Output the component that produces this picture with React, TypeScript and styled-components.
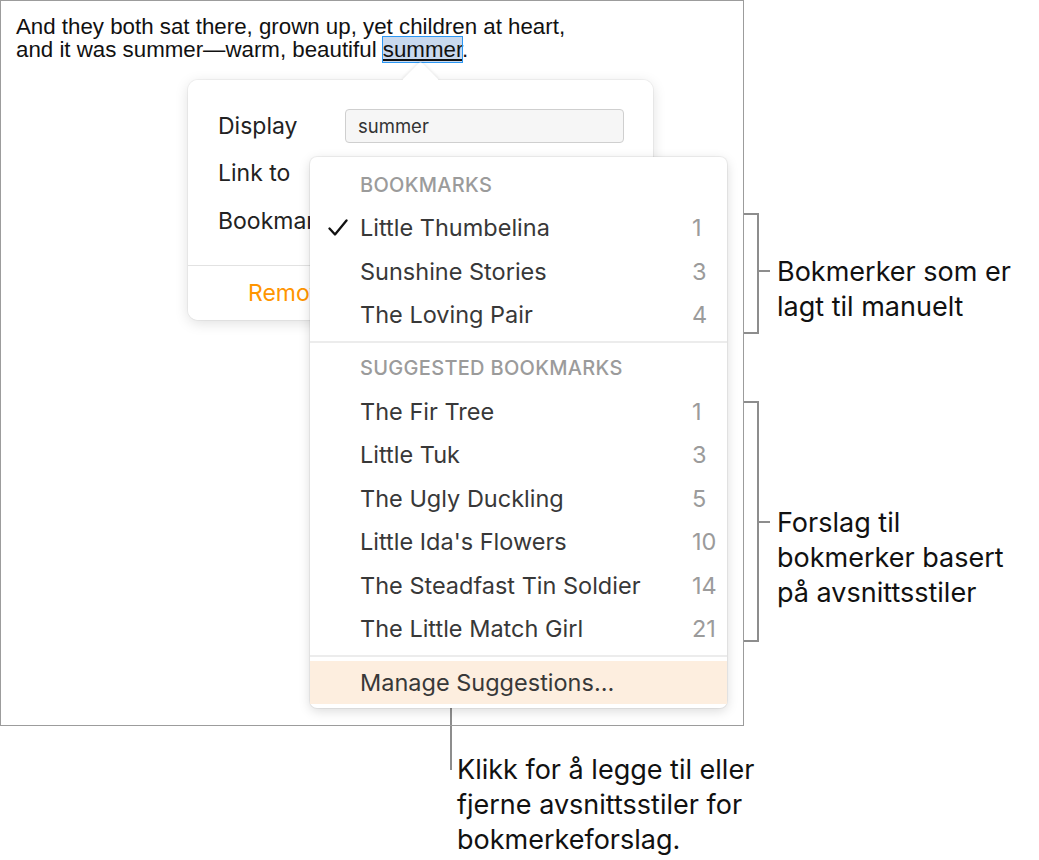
import React from "react";
import styled, { createGlobalStyle } from "styled-components";

const Global = createGlobalStyle`
  html, body { margin: 0; padding: 0; background: #ffffff; }
  * { box-sizing: border-box; }
`;

const Page = styled.div`
  width: 1039px;
  height: 860px;
  display: flex;
  flex-direction: column;
  font-family: "Inter", "Noto Sans", sans-serif;
`;

const TopRow = styled.div`
  display: flex;
  align-items: flex-start;
`;

const Frame = styled.div`
  position: relative;
  width: 744px;
  height: 726px;
  border: 1px solid #9c9c9c;
  flex: none;
`;

const Paragraph = styled.p`
  margin: 0;
  padding: 14px 0 0 15px;
  font-family: "Liberation Sans", Arial, sans-serif;
  font-size: 22.3px;
  line-height: 23px;
  color: #111111;
`;

const Selected = styled.span`
  background: #c9d9ee;
  outline: 1px solid #2b97f4;
  text-decoration: underline;
  text-underline-offset: 2px;
`;

const Popover = styled.div`
  position: absolute;
  left: 187px;
  top: 79px;
  width: 465px;
  height: 240px;
  background: #ffffff;
  border-radius: 10px;
  box-shadow: 0 0 0 1px rgba(0, 0, 0, 0.04), 0 3px 14px rgba(0, 0, 0, 0.13);
`;

const Arrow = styled.div`
  position: absolute;
  left: 219px;
  top: -13px;
  width: 27px;
  height: 27px;
  background: #ffffff;
  transform: rotate(45deg);
  border-radius: 3px;
  box-shadow: -1px -1px 3px rgba(0, 0, 0, 0.08);
`;

const PopBody = styled.div`
  position: relative;
  display: flex;
  flex-direction: column;
  height: 100%;
  background: #ffffff;
  border-radius: 10px;
`;

const Form = styled.div`
  padding: 22px 28px 20px 30px;
  display: flex;
  flex-direction: column;
  border-bottom: 1px solid #e2e2e2;
`;

const FormRow = styled.div`
  height: 47.5px;
  display: grid;
  grid-template-columns: 127px 279px;
  align-items: center;
`;

const Label = styled.span`
  font-size: 23px;
  color: #222222;
`;

const Field = styled.div`
  height: 34px;
  border: 1px solid #cfcfcf;
  border-radius: 4px;
  background: #f6f6f6;
  padding: 0 12px;
  display: flex;
  align-items: center;
  font-size: 18.5px;
  color: #333333;
`;

const Footer = styled.div`
  flex: 1;
  display: flex;
  align-items: center;
  padding-left: 60px;
  font-size: 23px;
  color: #ff9500;
`;

const Menu = styled.div`
  position: absolute;
  left: 309px;
  top: 156px;
  width: 417px;
  background: #ffffff;
  border-radius: 7px;
  padding: 6px 0 4px;
  box-shadow: 0 0 0 1px rgba(0, 0, 0, 0.05), 0 3px 12px rgba(0, 0, 0, 0.15);
  display: flex;
  flex-direction: column;
`;

const Heading = styled.div`
  height: 43px;
  display: flex;
  align-items: center;
  padding-left: 50px;
  font-size: 20px;
  font-weight: 500;
  letter-spacing: 0.3px;
  color: #9b9b9b;
`;

const Item = styled.div<{ $highlight?: boolean }>`
  height: 43.5px;
  display: flex;
  align-items: center;
  padding: 0 12px 0 18px;
  font-size: 23.5px;
  color: #383838;
  background: ${(p) => (p.$highlight ? "#fdeedf" : "transparent")};
`;

const CheckSlot = styled.span`
  width: 32px;
  flex: none;
  display: flex;
  align-items: center;
`;

const ItemName = styled.span`
  flex: 1;
  white-space: nowrap;
`;

const Count = styled.span`
  width: 23px;
  flex: none;
  color: #9b9b9b;
  white-space: nowrap;
`;

const Divider = styled.div`
  height: 2px;
  margin: 4px 0;
  background: #ececec;
`;

const Callouts = styled.div`
  display: flex;
  flex-direction: column;
  margin-left: -1px;
  padding-top: 213px;
  gap: 67px;
`;

const Callout = styled.div`
  display: flex;
  align-items: flex-start;
`;

const Bracket = styled.div<{ $h: number }>`
  width: 16px;
  height: ${(p) => p.$h}px;
  flex: none;
  border: 2px solid #8d8d8d;
  border-left: none;
`;

const LabelRow = styled.div<{ $offset: number }>`
  display: flex;
  align-items: flex-start;
  margin-top: ${(p) => p.$offset}px;
`;

const Tick = styled.div`
  width: 11px;
  height: 2px;
  margin-top: 16.5px;
  background: #8d8d8d;
  flex: none;
`;

const Note = styled.div`
  margin-left: 7px;
  font-family: "Inter", "Noto Sans", sans-serif;
  font-size: 27px;
  line-height: 35px;
  color: #111111;
  white-space: nowrap;
`;

const BottomCallout = styled.div`
  display: flex;
  align-items: flex-start;
  margin-top: -21px;
  padding-left: 450px;
`;

const Leader = styled.div`
  width: 2px;
  height: 65px;
  background: #8d8d8d;
  flex: none;
`;

const BottomNote = styled(Note)`
  margin-left: 5px;
  margin-top: 46.5px;
`;

const Check = () => (
  <svg width="20" height="18" viewBox="0 0 20 18">
    <path d="M1.5 9.5 L7 15.5 L18.5 1.5" fill="none" stroke="#111" strokeWidth="2.3" strokeLinecap="round" strokeLinejoin="round" />
  </svg>
);

const bookmarks = [
  { name: "Little Thumbelina", n: 1, checked: true },
  { name: "Sunshine Stories", n: 3 },
  { name: "The Loving Pair", n: 4 },
];

const suggested = [
  { name: "The Fir Tree", n: 1 },
  { name: "Little Tuk", n: 3 },
  { name: "The Ugly Duckling", n: 5 },
  { name: "Little Ida's Flowers", n: 10 },
  { name: "The Steadfast Tin Soldier", n: 14 },
  { name: "The Little Match Girl", n: 21 },
];

export default function App() {
  return (
    <>
      <Global />
      <Page>
        <TopRow>
          <Frame>
            <Paragraph>
              And they both sat there, grown up, yet children at heart,
              <br />
              and it was summer—warm, beautiful <Selected>summer</Selected>.
            </Paragraph>
            <Popover>
              <Arrow />
              <PopBody>
                <Form>
                  <FormRow>
                    <Label>Display</Label>
                    <Field>summer</Field>
                  </FormRow>
                  <FormRow>
                    <Label>Link to</Label>
                  </FormRow>
                  <FormRow>
                    <Label>Bookmark</Label>
                  </FormRow>
                </Form>
                <Footer>Remove Link</Footer>
              </PopBody>
            </Popover>
            <Menu>
              <Heading>BOOKMARKS</Heading>
              {bookmarks.map((b) => (
                <Item key={b.name}>
                  <CheckSlot>{b.checked ? <Check /> : null}</CheckSlot>
                  <ItemName>{b.name}</ItemName>
                  <Count>{b.n}</Count>
                </Item>
              ))}
              <Divider />
              <Heading>SUGGESTED BOOKMARKS</Heading>
              {suggested.map((b) => (
                <Item key={b.name}>
                  <CheckSlot />
                  <ItemName>{b.name}</ItemName>
                  <Count>{b.n}</Count>
                </Item>
              ))}
              <Divider />
              <Item $highlight>
                <CheckSlot />
                <ItemName>Manage Suggestions…</ItemName>
              </Item>
            </Menu>
          </Frame>
          <Callouts>
            <Callout>
              <Bracket $h={121} />
              <LabelRow $offset={40.5}>
                <Tick />
                <Note>
                  Bokmerker som er
                  <br />
                  lagt til manuelt
                </Note>
              </LabelRow>
            </Callout>
            <Callout>
              <Bracket $h={241} />
              <LabelRow $offset={103.5}>
                <Tick />
                <Note>
                  Forslag til
                  <br />
                  bokmerker basert
                  <br />
                  på avsnittsstiler
                </Note>
              </LabelRow>
            </Callout>
          </Callouts>
        </TopRow>
        <BottomCallout>
          <Leader />
          <BottomNote>
            Klikk for å legge til eller
            <br />
            fjerne avsnittsstiler for
            <br />
            bokmerkeforslag.
          </BottomNote>
        </BottomCallout>
      </Page>
    </>
  );
}
